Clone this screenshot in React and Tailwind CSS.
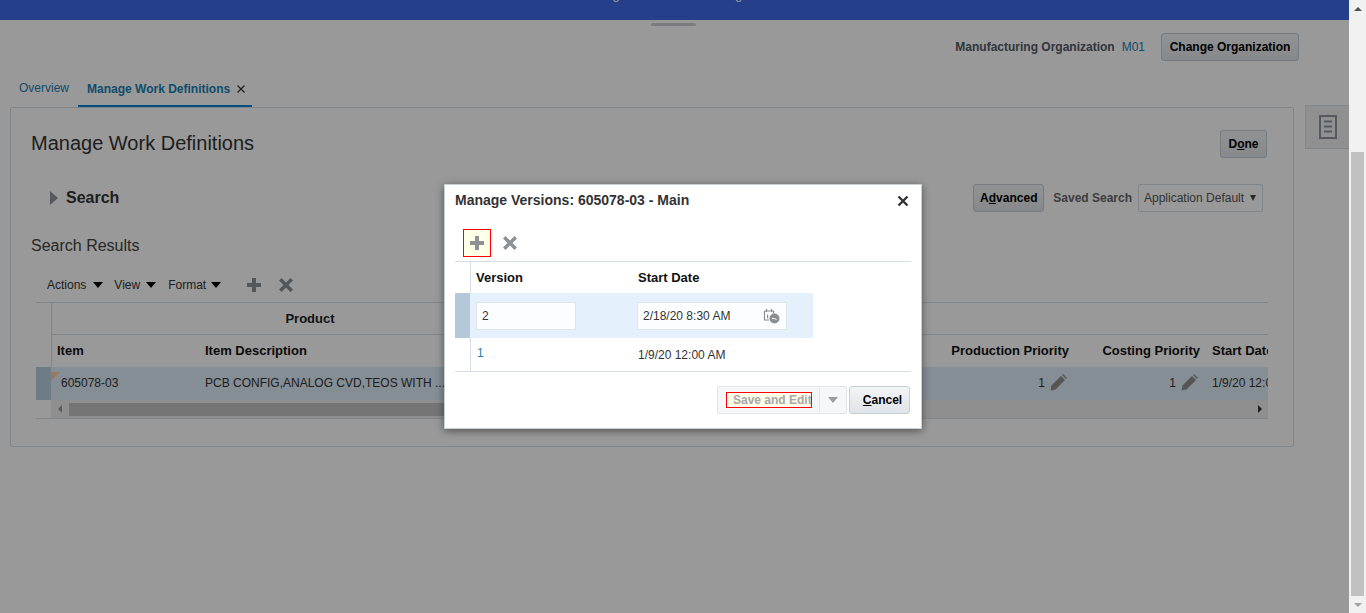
import React from "react";

const font = { fontFamily: '"Liberation Sans", Arial, sans-serif' };

function Plus({ className = "", color = "#8d9296" }) {
  return (
    <svg width="16" height="16" viewBox="0 0 16 16" className={className}>
      <path d="M6 1h4v5h5v4h-5v5H6v-5H1V6h5z" fill={color} />
    </svg>
  );
}
function Cross({ className = "", color = "#8d9296" }) {
  return (
    <svg width="16" height="16" viewBox="0 0 16 16" className={className}>
      <path d="M1 3.5 3.5 1 8 5.5 12.500 1 15 3.500 10.500 8 15 12.500 12.500 15 8 10.500 3.500 15 1 12.500 5.500 8z" fill={color} />
    </svg>
  );
}
function Caret({ className = "" }) {
  return <span className={`inline-block w-0 h-0 border-l-[5px] border-r-[5px] border-t-[6px] border-l-transparent border-r-transparent border-t-black ${className}`} />;
}
function Pencil() {
  return (
    <svg width="17" height="17" viewBox="0 0 17 17" className="shrink-0">
      <path d="M0.500 16.500 1.500 11.500 11 2l4 4-9.500 9.500z" fill="#8e8e8e" />
      <path d="M12 1l1-1 4 4-1 1z" fill="#8e8e8e" />
    </svg>
  );
}
function Btn({ children, className = "" }) {
  return (
    <button className={`h-7 rounded-[3px] border border-[#c4ced7] bg-gradient-to-b from-[#f2f4f6] to-[#e0e4e8] text-[12px] font-bold text-[#000] ${className}`}>
      {children}
    </button>
  );
}

export default function App() {
  return (
    <div style={font} className="relative h-[613px] w-[1366px] overflow-hidden bg-white text-[12px] text-[#333]">
      <div className="flex h-full">
        <div className="w-[1349px] shrink-0">
          {/* top band */}
          <div className="h-5 overflow-hidden bg-[#4069e6] pl-[580px] text-white">
            <div className="mt-[-13px] text-[13px] leading-[16px] whitespace-nowrap">Manage Definitions Working</div>
          </div>
          <div className="flex justify-center pt-[3px] pr-[3px]">
            <div className="h-[3px] w-[45px] rounded-full bg-[#cfcfd6]" />
          </div>

          {/* org row */}
          <div className="mt-[7px] flex h-7 items-center justify-end pr-[50px]">
            <span className="font-bold text-[#4f5a66]">Manufacturing Organization</span>
            <span className="ml-[7px] text-[#1a80b4]">M01</span>
            <Btn className="ml-[16px] w-[138px]">Change Organization</Btn>
          </div>

          {/* tabs */}
          <div className="mt-[15px] flex h-[32px] pl-[10px] text-[12px]">
            <div className="flex items-center px-[9px] pb-[8px] text-[#1a80b4]">Overview</div>
            <div className="flex items-center gap-[7px] border-b-[3px] border-[#0580d8] pl-[9px] pr-[7px] pb-[4px] font-bold text-[#1a80b4]">
              Manage Work Definitions
              <span className="pt-[1px] text-[#222]">
                <svg width="8" height="8" viewBox="0 0 8 8"><path d="M.5.5l7 7M7.500.5l-7 7" stroke="#333" strokeWidth="1.200" /></svg>
              </span>
            </div>
          </div>

          <div className="flex">
            {/* panel */}
            <div className="ml-[10px] mt-[-1px] h-[340px] w-[1284px] shrink-0 rounded-[2px] border border-[#d6dfe6] px-[20px]">
              <div className="flex items-center justify-between pt-[21px]">
                <h1 className="text-[20px] leading-[28px] text-[#333]">Manage Work Definitions</h1>
                <Btn className="mr-[6px] w-[47px] translate-y-[1px]">
                  D<u>o</u>ne
                </Btn>
              </div>

              <div className="mt-[27px] flex h-7 items-center justify-between">
                <div className="flex items-center pl-[19px]">
                  <span className="h-0 w-0 border-y-[7px] border-l-[8px] border-y-transparent border-l-[#8f959b]" />
                  <span className="ml-[8px] text-[16px] font-bold text-[#333]">Search</span>
                </div>
                <div className="flex items-center pr-[10px]">
                  <Btn className="w-[71px]">
                    A<u>d</u>vanced
                  </Btn>
                  <span className="ml-[9px] font-bold text-[#666]">Saved Search</span>
                  <div className="ml-[6px] flex h-[28px] w-[125px] items-center justify-between rounded-[2px] border border-[#d6dfe6] pl-[5px] pr-[6px] text-[#555]">
                    Application Default
                    <span className="h-0 w-0 border-x-[3px] border-t-[6px] border-x-transparent border-t-[#444]" />
                  </div>
                </div>
              </div>

              <div className="mt-[24px] text-[16px] leading-[20px] text-[#444]">Search Results</div>

              {/* table toolbar */}
              <div className="mt-[17px] flex h-[24px] items-center pl-[16px] text-[#333]">
                <span>Actions</span>
                <Caret className="ml-[7px]" />
                <span className="ml-[11px]">View</span>
                <Caret className="ml-[6px]" />
                <span className="ml-[12px]">Format</span>
                <Caret className="ml-[5px]" />
                <Plus className="ml-[25px]" />
                <Cross className="ml-[16px]" />
              </div>

              {/* table */}
              <div className="ml-[5px] mt-[5px] w-[1232px] overflow-hidden border-y border-[#d6dfe6]">
                <div className="flex h-[32px]">
                  <div className="w-[15px] shrink-0" />
                  <div className="flex w-[517px] items-center justify-center border-b border-l border-[#d6dfe6] text-[13px] font-bold text-[#222]">Product</div>
                  <div className="flex-1 border-b border-[#d6dfe6]" />
                </div>
                <div className="flex h-[32px] text-[13px] font-bold text-[#111]">
                  <div className="w-[15px] shrink-0" />
                  <div className="flex w-[154px] shrink-0 items-center border-l border-[#d6dfe6] pl-[5px]">Item</div>
                  <div className="flex w-[739px] shrink-0 items-center">Item Description</div>
                  <div className="flex w-[125px] shrink-0 items-center justify-end">Production Priority</div>
                  <div className="flex w-[131px] shrink-0 items-center justify-end">Costing Priority</div>
                  <div className="ml-[12px] flex items-center whitespace-nowrap">Start Date</div>
                </div>
                <div className="flex h-[33px] bg-[#deecf8]">
                  <div className="w-[15px] shrink-0 bg-[#b8cfe0]" />
                  <div className="relative flex w-[154px] shrink-0 items-center pb-[2px] pl-[10px] text-[#333]">
                    <span className="absolute left-0 top-[5px] h-0 w-0 border-r-[9px] border-t-[9px] border-r-transparent border-t-[#ffc898]" />
                    605078-03
                  </div>
                  <div className="flex w-[739px] shrink-0 items-center pb-[2px]">PCB CONFIG,ANALOG CVD,TEOS WITH ...</div>
                  <div className="flex w-[125px] shrink-0 items-center justify-end gap-[5px] pb-[2px] pr-[2px]">
                    <span>1</span>
                    <Pencil />
                  </div>
                  <div className="flex w-[131px] shrink-0 items-center justify-end gap-[5px] pb-[2px] pr-[2px]">
                    <span>1</span>
                    <Pencil />
                  </div>
                  <div className="ml-[12px] flex items-center whitespace-nowrap pb-[2px]">1/9/20 12:00 AM</div>
                </div>
                <div className="flex h-[18px] items-center bg-[#eeeeee]">
                  <div className="h-full w-[15px] shrink-0 bg-white" />
                  <div className="flex w-[18px] items-center justify-center">
                    <span className="h-0 w-0 border-y-[4px] border-r-[4px] border-y-transparent border-r-[#999]" />
                  </div>
                  <div className="h-[13px] w-[500px] bg-[#c3c3c3]" />
                  <div className="ml-auto flex w-[16px] items-center justify-center">
                    <span className="h-0 w-0 border-y-[4px] border-l-[4px] border-y-transparent border-l-[#333]" />
                  </div>
                </div>
              </div>
            </div>

            {/* side tab */}
            <div className="ml-[11px] mt-[-3px] flex h-[44px] w-[44px] shrink-0 items-center justify-center border border-r-0 border-[#d6dfe6] bg-[#f0f0f0]">
              <svg width="18" height="24" viewBox="0 0 18 24">
                <rect x="1" y="1" width="16" height="22" fill="none" stroke="#8f979f" strokeWidth="2" />
                <path d="M5 6.500h8M5 11.500h8M5 16.500h8" stroke="#8f979f" strokeWidth="2" />
              </svg>
            </div>
          </div>
        </div>

        {/* browser scrollbar */}
        <div className="flex w-[17px] shrink-0 flex-col bg-[#f1f1f1]">
          <div className="flex h-[17px] items-center justify-center">
            <span className="h-0 w-0 border-x-[4px] border-b-[4px] border-x-transparent border-b-[#505050]" />
          </div>
          <div className="ml-[2px] mt-[135px] h-[444px] w-[13px] bg-[#c1c1c1]" />
          <div className="flex h-[17px] items-center justify-center">
            <span className="h-0 w-0 border-x-[4px] border-t-[4px] border-x-transparent border-t-[#a3a3a3]" />
          </div>
        </div>
      </div>

      {/* dim layer */}
      <div className="absolute left-0 top-0 h-full w-[1349px] bg-black/40" />

      {/* dialog */}
      <div className="absolute left-[444px] top-[184px] h-[245px] w-[478px] border border-[#c5d0d9] bg-white shadow-[0_2px_8px_rgba(0,0,0,0.45)]">
        <div className="flex h-[30px] items-center justify-between pl-[10px] pr-[12px] pt-[1px]">
          <span className="text-[14px] font-bold text-[#333]">Manage Versions: 605078-03 - Main</span>
          <svg width="12" height="12" viewBox="0 0 12 12">
            <path d="M1.500 1.500l9 9M10.500 1.500l-9 9" stroke="#333" strokeWidth="2.400" />
          </svg>
        </div>

        <div className="mt-[14px] flex h-[28px] items-center pl-[18px]">
          <div className="flex h-[28px] w-[28px] items-center justify-center border border-[#ff0000] bg-[#ffffe8]">
            <Plus />
          </div>
          <Cross className="ml-[11px]" />
        </div>

        <div className="mx-[10px] mt-[4px] border-y border-[#d6dfe6]">
          <div className="flex h-[31px]">
            <div className="w-[15px] shrink-0" />
            <div className="flex w-[168px] shrink-0 items-center border-l border-[#d6dfe6] pl-[5px] text-[13px] font-bold text-[#111]">Version</div>
            <div className="flex items-center text-[13px] font-bold text-[#111]">Start Date</div>
          </div>
          <div className="flex h-[45px]">
            <div className="w-[15px] shrink-0 bg-[#b3c8d8]" />
            <div className="flex w-[343px] items-center bg-[#e4f0fb]">
              <div className="ml-[6px] flex h-[28px] w-[100px] shrink-0 items-center rounded-[2px] border border-[#dfe4e8] bg-[#fcfdfe] pl-[5px] text-[#333]">2</div>
              <div className="ml-[61px] flex h-[28px] w-[150px] shrink-0 items-center justify-between rounded-[2px] border border-[#dfe4e8] bg-[#fcfdfe] pl-[5px] pr-[6px] text-[#333]">
                2/18/20 8:30 AM
                <svg width="17" height="16" viewBox="0 0 17 16">
                  <path d="M1.500 3h9v2.500M1.500 3v9h4.500M3.500 1v3M8.500 1v3" fill="none" stroke="#8a8f94" strokeWidth="1.200" />
                  <path d="M4 6.500h1.200v4H4z" fill="#8a8f94" />
                  <circle cx="11.500" cy="10.500" r="5" fill="#8a8f94" />
                  <path d="M9 10.500h2.500l2 1" fill="none" stroke="#fff" strokeWidth="1" />
                </svg>
              </div>
            </div>
          </div>
          <div className="flex h-[33px]">
            <div className="w-[15px] shrink-0" />
            <div className="flex w-[168px] shrink-0 items-center border-l border-[#d6dfe6] pb-[3px] pl-[6px] text-[#1a80b4]">1</div>
            <div className="flex items-center pt-[1px] text-[#333]">1/9/20 12:00 AM</div>
          </div>
        </div>

        <div className="mr-[11px] mt-[14px] flex items-center justify-end">
          <div className="flex h-[28px] w-[130px] items-center rounded-[2px] border border-[#e2e6ea] bg-[#f5f7f8]">
            <div className="ml-[8px] flex h-[16px] w-[86px] shrink-0 items-center overflow-hidden whitespace-nowrap border border-[#ff0000] bg-[#fdfde8] pl-[6px] font-bold text-[#a8a8a8]">
              Save and Edit
            </div>
            <div className="ml-[7px] h-[24px] w-px bg-[#e2e6ea]" />
            <span className="ml-[8px] h-0 w-0 border-x-[5px] border-t-[6px] border-x-transparent border-t-[#9a9fa3]" />
          </div>
          <Btn className="ml-[2px] w-[61px] pl-[6px]">
            <u>C</u>ancel
          </Btn>
        </div>
      </div>
    </div>
  );
}
